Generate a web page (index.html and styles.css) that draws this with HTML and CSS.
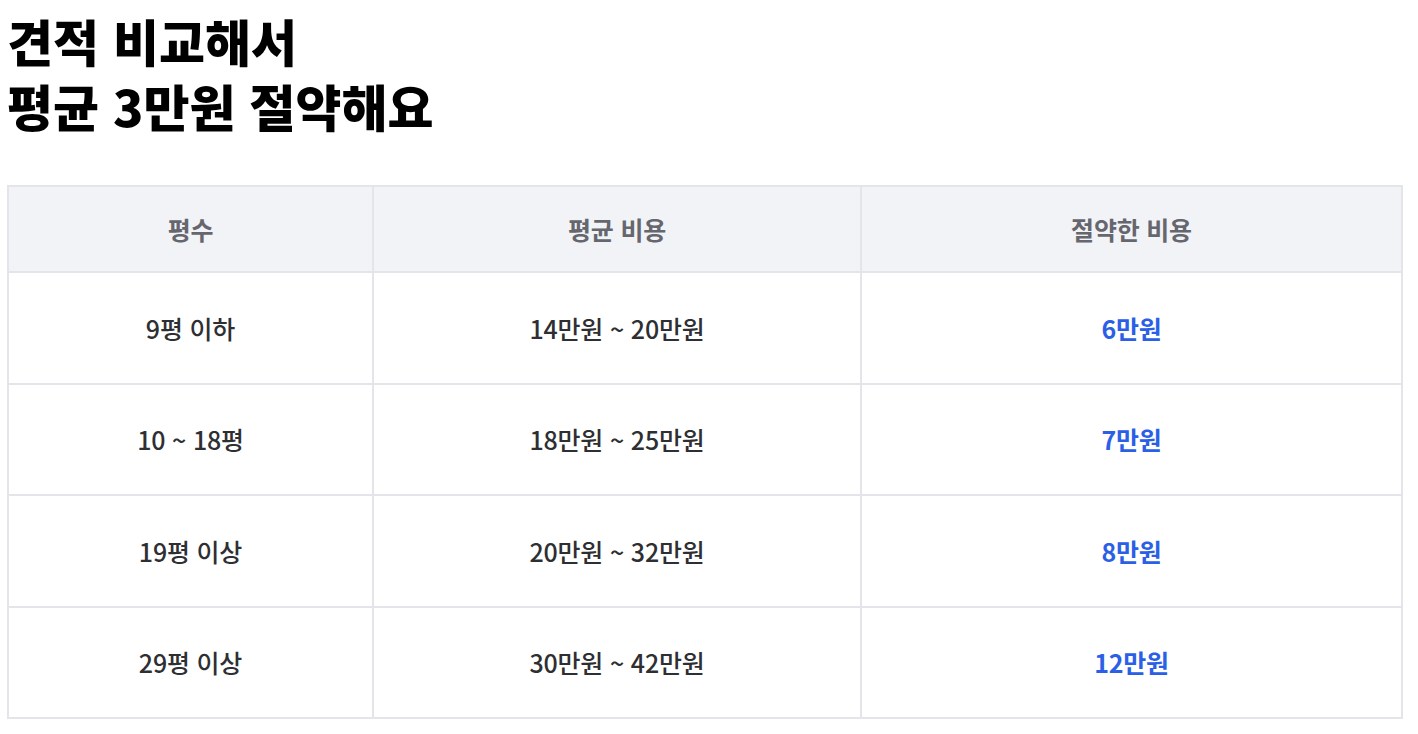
FILE: index.html
```html
<!DOCTYPE html>
<html lang="ko">
<head>
<meta charset="utf-8">
<link rel="stylesheet" href="styles.css">
</head>
<body>
<main class="page">
  <h1 class="title">견적 비교해서<br>평균 3만원 절약해요</h1>
  <table class="price-table">
    <colgroup>
      <col class="c1"><col class="c2"><col class="c3">
    </colgroup>
    <thead>
      <tr><th>평수</th><th>평균 비용</th><th>절약한 비용</th></tr>
    </thead>
    <tbody>
      <tr><td>9평 이하</td><td>14만원 ~ 20만원</td><td class="save">6만원</td></tr>
      <tr><td>10 ~ 18평</td><td>18만원 ~ 25만원</td><td class="save">7만원</td></tr>
      <tr><td>19평 이상</td><td>20만원 ~ 32만원</td><td class="save">8만원</td></tr>
      <tr><td>29평 이상</td><td>30만원 ~ 42만원</td><td class="save">12만원</td></tr>
    </tbody>
  </table>
</main>
</body>
</html>
```

FILE: styles.css
```css
html, body {
  margin: 0;
  padding: 0;
  background: #ffffff;
}
body {
  font-family: "Noto Sans CJK KR", "Noto Sans", sans-serif;
  color: #111;
}
.page {
  padding: 8px 15px 0 7px;
}
.title {
  margin: 0 0 47px 0;
  font-size: 50px;
  line-height: 65px;
  font-weight: 800;
  color: #000;
  letter-spacing: 0;
}
.price-table {
  width: 100%;
  border-collapse: collapse;
  border: 2px solid #e4e5ea;
}
.c1 { width: 365px; }
.c2 { width: 488px; }
.price-table th,
.price-table td {
  border: 2px solid #e4e5ea;
  text-align: center;
  font-size: 25px;
  letter-spacing: -0.2px;
}
.price-table th {
  background: #f2f3f7;
  color: #66676e;
  font-weight: 600;
  height: 84px;
  padding: 0;
}
.price-table td {
  height: 109.5px;
  padding: 0;
  color: #2e2f33;
  font-weight: 500;
}
.price-table td.save {
  color: #2b5fe6;
  font-weight: 700;
}
```
